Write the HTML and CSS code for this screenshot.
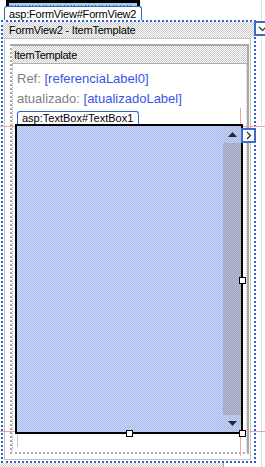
FILE: index.html
```html
<!DOCTYPE html>
<html lang="pt">
<head>
    <meta charset="UTF-8">
    <meta name="viewport" content="width=device-width, initial-scale=1.0">
    <title>FormView2 - ItemTemplate</title>
    <link rel="stylesheet" href="styles.css">
</head>
<body>
    <div class="surface">
        <div class="design">
            <!-- control above, mostly hidden behind the tag -->
            <div class="cut-label"><div class="cut-label-fill"></div></div>

            <div class="formview">
                <div class="tag fv-tag">asp:FormView#FormView2</div>
                <div class="smart-tag fv-smart">
                    <svg width="9" height="6" viewBox="0 0 9 6"><polyline points="1,1 4.5,4.5 8,1" fill="none" stroke="#1c2a4a" stroke-width="1.2"/></svg>
                </div>

                <div class="fv-header">FormView2 - ItemTemplate</div>

                <div class="fv-body">
                    <div class="template">
                        <div class="template-header">ItemTemplate</div>
                        <div class="template-content">
                            <div class="field"><span class="caption">Ref:</span> <span class="bound">[referenciaLabel0]</span></div>
                            <div class="field"><span class="caption">atualizado:</span> <span class="bound">[atualizadoLabel]</span></div>

                            <div class="textbox-wrap">
                                <div class="tag tb-tag">asp:TextBox#TextBox1</div>
                                <div class="textbox">
                                    <div class="textbox-fill"></div>
                                    <div class="scrollbar">
                                        <div class="scroll-btn">
                                            <svg width="9" height="5" viewBox="0 0 9 5"><polygon points="0,5 9,5 4.5,0" fill="#1c2a4a"/></svg>
                                        </div>
                                        <div class="scroll-track"></div>
                                        <div class="scroll-btn">
                                            <svg width="9" height="5" viewBox="0 0 9 5"><polygon points="0,0 9,0 4.5,5" fill="#1c2a4a"/></svg>
                                        </div>
                                    </div>
                                </div>
                                <div class="handle handle-right"></div>
                                <div class="handle handle-bottom"></div>
                                <div class="handle handle-corner"></div>
                                <div class="smart-tag tb-smart">
                                    <svg width="6" height="9" viewBox="0 0 6 9"><polyline points="1,1 4.5,4.5 1,8" fill="none" stroke="#1c2a4a" stroke-width="1.2"/></svg>
                                </div>
                            </div>
                            <div class="cell-tail"></div>
                        </div>
                    </div>
                </div>
            </div>

            <div class="next-control"></div>
        </div>
        <div class="gutter"></div>

        <!-- margin guides of the selected textbox -->
        <div class="guide guide-top"></div>
        <div class="guide guide-bottom"></div>
        <div class="guide guide-side"></div>
    </div>
</body>
</html>
```

FILE: styles.css
```css
body {
    margin: 0;
    background: #fff;
    font-family: 'Liberation Sans', Arial, sans-serif;
    color: #000;
}
.surface {
    position: relative;
    display: flex;
    width: 265px;
    height: 467px;
    overflow: hidden;
    background: #fff;
}
.design {
    width: 262px;
    padding-top: 20px;
    box-sizing: border-box;
}
.gutter {
    width: 3px;
    border-left: 1px dotted #c4c4c4;
}

/* partly hidden label above the form view */
.cut-label {
    position: absolute;
    left: 6px;
    top: 0;
    width: 134px;
    height: 7px;
    box-sizing: border-box;
    border: 3px solid #000;
    border-bottom: 0;
    background: #a6caf0;
}
.cut-label-fill {
    height: 2px;
    margin: 2px 6px 0 2px;
    background: repeating-linear-gradient(90deg, #000 0 1px, #a6caf0 1px 4px, #000 4px 5px, #a6caf0 5px 7px);
    opacity: 0.5;
}

.formview {
    position: relative;
    display: flex;
    flex-direction: column;
    margin-left: 1px;
    width: 255px;
    height: 443px;
    box-sizing: border-box;
    border: 2px dotted #2f62d0;
}
.fv-header {
    height: 16px;
    line-height: 17px;
    padding-left: 6px;
    font-size: 11px;
    letter-spacing: -0.2px;
    background: repeating-conic-gradient(#c9c9c9 0 25%, #fff 0 50%) 0 0 / 2px 2px;
}
.fv-body {
    flex: 1;
    display: flex;
    margin: 0 3px 1px 1px;
    padding: 5px 1px 5px 5px;
    border: 1px solid #c4c4c4;
    background: #fff;
}

.template {
    flex: 1;
    display: flex;
    flex-direction: column;
    border: 2px solid #a9a9a9;
    border-left-style: dotted;
    border-bottom-style: dotted;
}
.template-header {
    height: 17px;
    line-height: 18px;
    padding-left: 2px;
    font-size: 11px;
    letter-spacing: -0.25px;
    border-bottom: 1px solid #b0b0b0;
    background: repeating-conic-gradient(#c9c9c9 0 25%, #fff 0 50%) 0 0 / 2px 2px;
}
.template-content {
    flex: 1;
    padding: 5px 0 0 2px;
    border-left: 1px dotted #b4b4b4;
    border-right: 1px dotted #c8c8c8;
}
.field {
    height: 20px;
    line-height: 20px;
    padding-left: 2px;
    font-size: 13px;
    white-space: nowrap;
}
.caption {
    color: #808080;
}
.bound {
    color: #3a55e4;
}

.textbox-wrap {
    position: relative;
    z-index: 2;
    margin-top: 15px;
    width: 228px;
}
.textbox {
    display: flex;
    height: 310px;
    box-sizing: border-box;
    border: 2px solid #000;
}
.textbox-fill {
    flex: 1;
    background: repeating-conic-gradient(#aabcf0 0 25%, #c8d6fa 0 50%) 0 0 / 2px 2px;
}
.scrollbar {
    width: 18px;
    display: flex;
    flex-direction: column;
}
.scroll-btn {
    height: 17px;
    display: flex;
    align-items: center;
    justify-content: center;
    background: repeating-conic-gradient(#adbae6 0 25%, #c4cff2 0 50%) 0 0 / 2px 2px;
}
.scroll-track {
    flex: 1;
    background: repeating-conic-gradient(#9aa0bc 0 25%, #bcc0d4 0 50%) 0 0 / 2px 2px;
}

.tag {
    position: absolute;
    height: 13px;
    padding: 0 5px 0 4px;
    border: 1px solid #2f66c8;
    border-bottom: 0;
    border-radius: 3px 3px 0 0;
    background: #fff;
    font-size: 11px;
    line-height: 14px;
    white-space: nowrap;
}
.fv-tag {
    left: 1px;
    top: -16px;
    letter-spacing: -0.2px;
}
.tb-tag {
    left: 2px;
    top: -13px;
    height: 12px;
    line-height: 13px;
}

.smart-tag {
    position: absolute;
    display: flex;
    align-items: center;
    justify-content: center;
    box-sizing: border-box;
    border: 2px solid #3a6ccc;
    background: #fff;
}
.fv-smart {
    left: 251px;
    top: -1px;
    width: 15px;
    height: 15px;
    justify-content: flex-start;
    padding-left: 2px;
}
.tb-smart {
    left: 226px;
    top: 4px;
    width: 15px;
    height: 15px;
}

.handle {
    position: absolute;
    width: 7px;
    height: 7px;
    box-sizing: border-box;
    border: 1px solid #000;
    background: #fff;
}
.handle-right {
    left: 224px;
    top: 153px;
}
.handle-bottom {
    left: 111px;
    top: 306px;
}
.handle-corner {
    left: 224px;
    top: 306px;
}

.cell-tail {
    margin-left: 2px;
    height: 13px;
    border-left: 1px solid #c8c8c8;
}

.next-control {
    width: 224px;
    height: 4px;
    box-sizing: border-box;
    border-right: 1px solid #a8a8a8;
    background: repeating-conic-gradient(#e2cbbb 0 25%, #fff 0 50%) 0 0 / 2px 2px;
}

.guide {
    position: absolute;
    z-index: 1;
    background: #eaa8a8;
}
.guide-top {
    left: 0;
    top: 126px;
    width: 265px;
    height: 1px;
}
.guide-bottom {
    left: 0;
    top: 431px;
    width: 265px;
    height: 1px;
}
.guide-side {
    left: 240px;
    top: 108px;
    width: 1px;
    height: 348px;
}
```
